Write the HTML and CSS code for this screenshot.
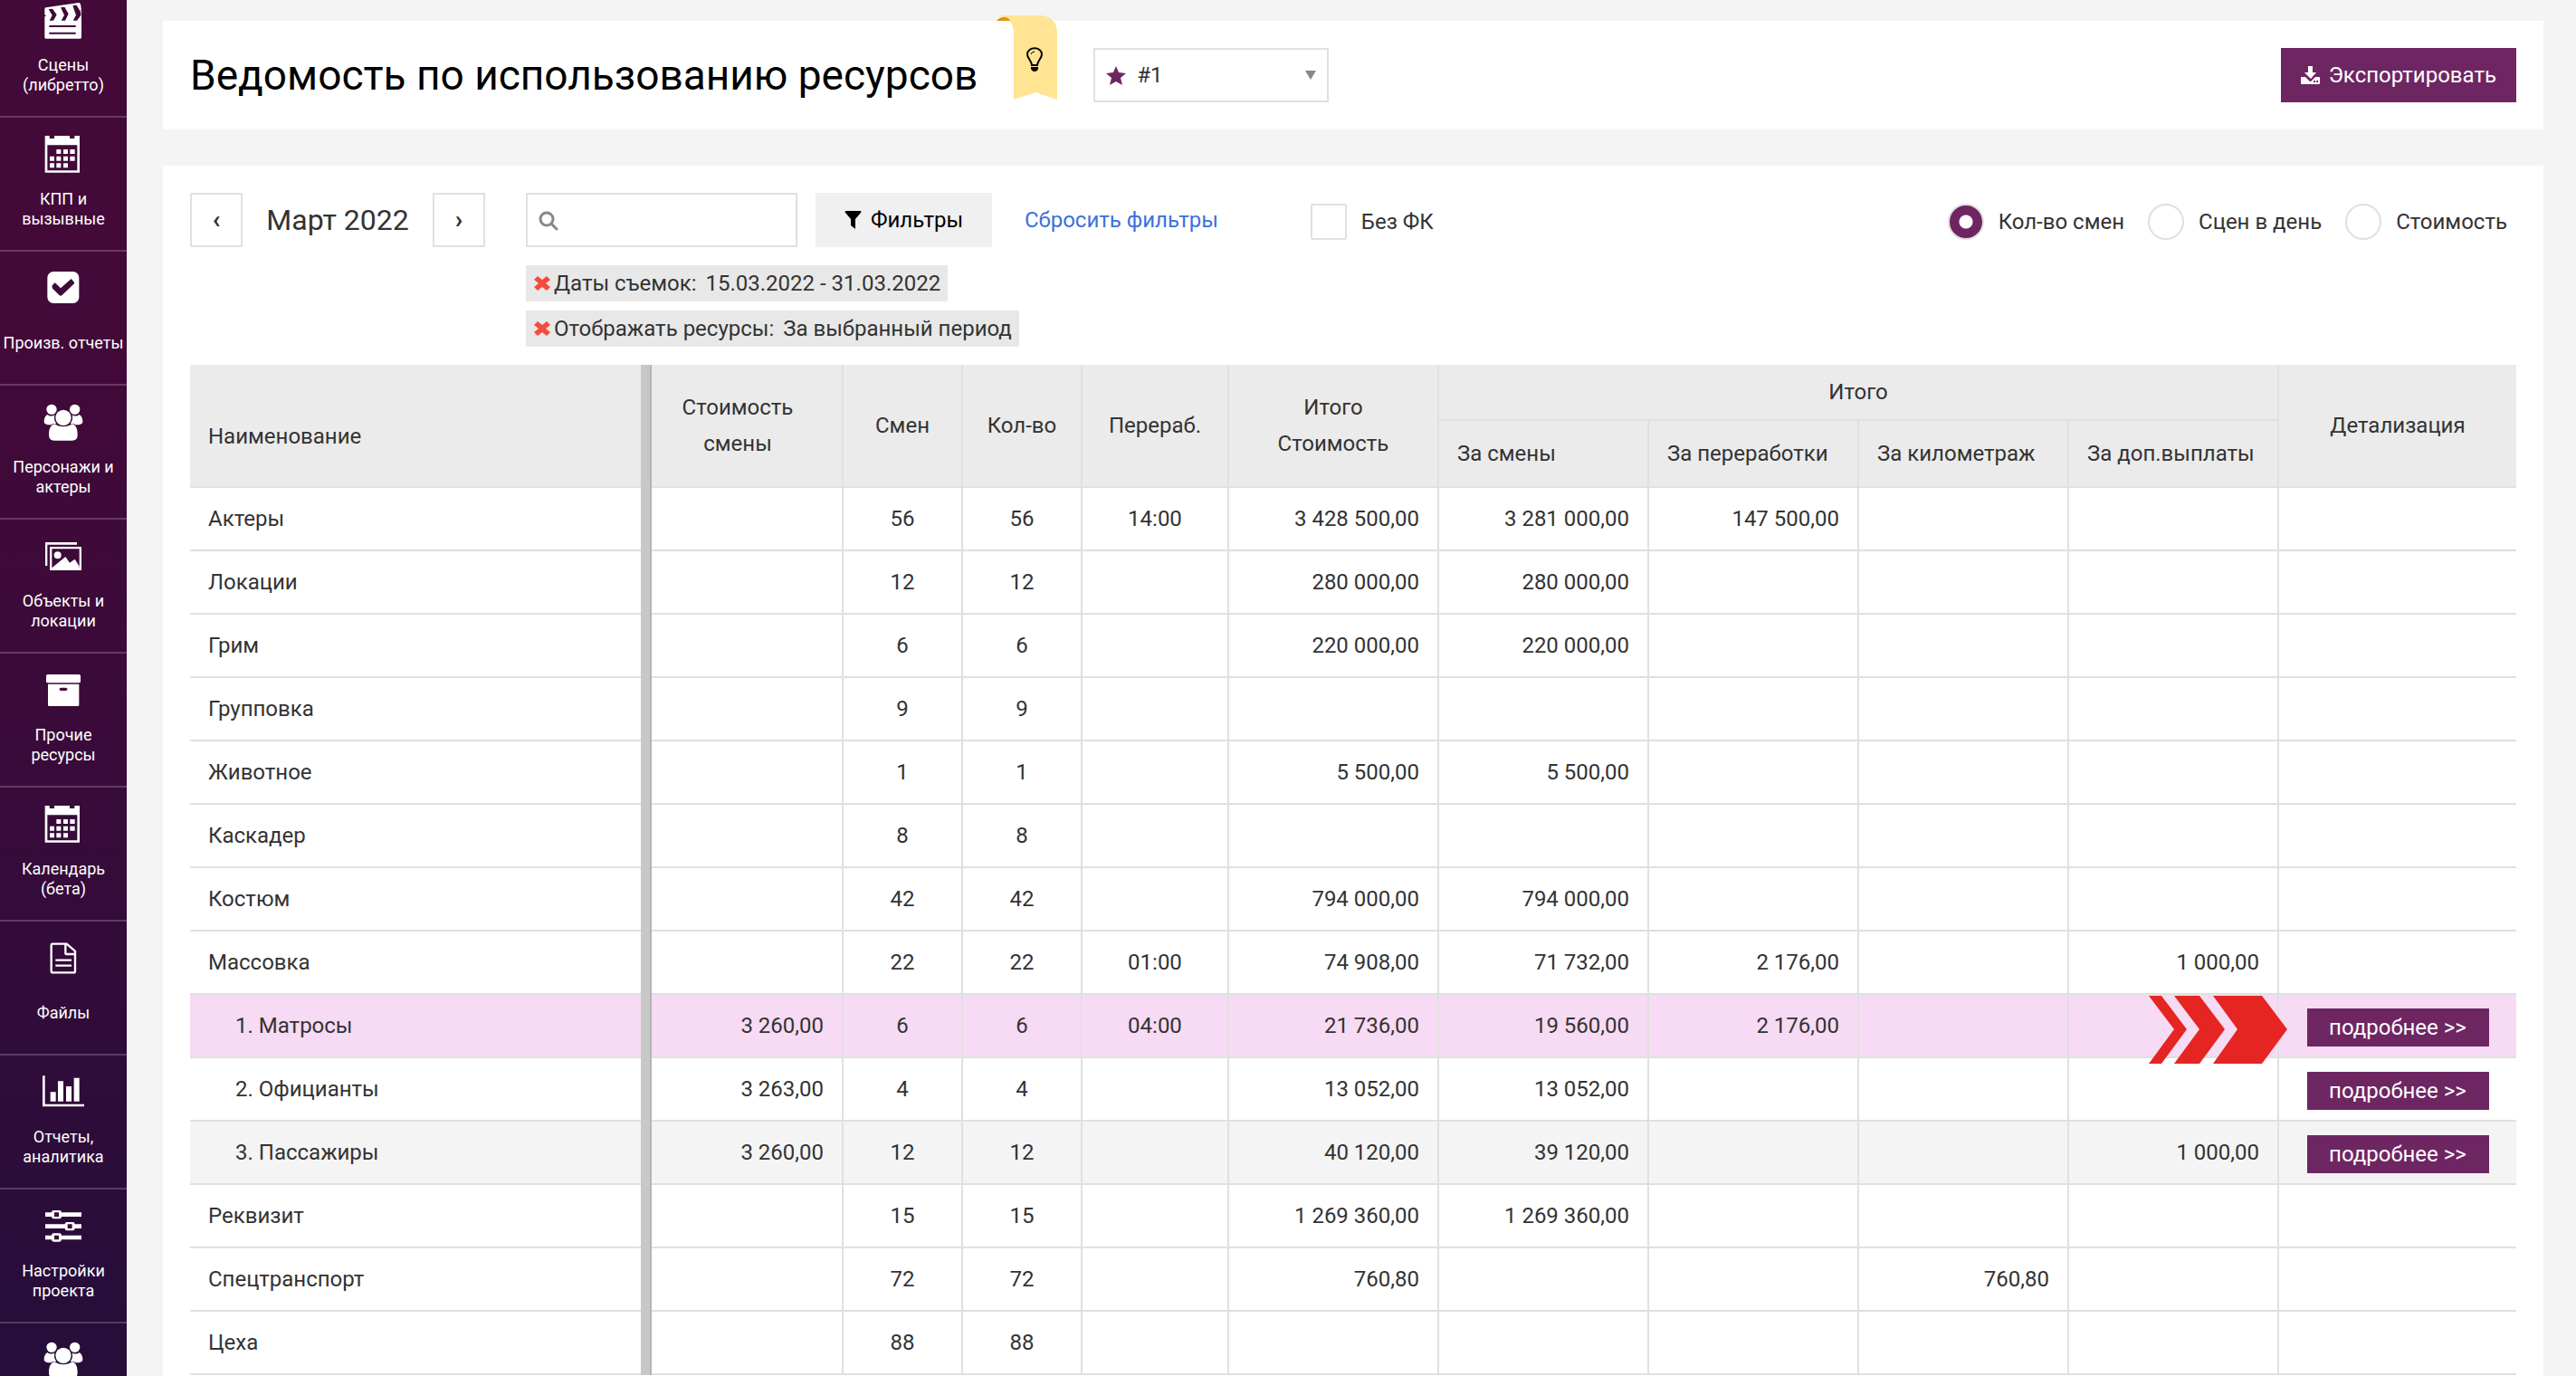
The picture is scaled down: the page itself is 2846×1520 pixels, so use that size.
FILE: index.html
```html
<!DOCTYPE html>
<html lang="ru">
<head>
  <meta charset="UTF-8">
  <meta name="viewport" content="width=device-width, initial-scale=1">
  <title>Ведомость по использованию ресурсов</title>
  <link rel="stylesheet" href="styles.css">
</head>
<body>

  <!-- Иконки, которые используются несколько раз -->
  <svg class="sprite" aria-hidden="true">
    <symbol id="icon-calendar" viewBox="0 0 132 132">
      <path fill-rule="evenodd" d="M5 6h15v9h16V6h51v9h16V6h17v122H5zM13 37v84h99V37z"/>
      <path d="M43 51h15v15H43zM66 51h15v15H66zM88 51h16v15H88zM21 74h15v15H21zM43 74h15v15H43zM66 74h15v15H66zM88 74h16v15H88zM21 97h15v15H21zM43 97h15v15H43zM66 97h15v15H66z"/>
    </symbol>
    <symbol id="icon-group" viewBox="0 0 132 132">
      <circle cx="27" cy="25" r="17"/>
      <circle cx="104" cy="25" r="17"/>
      <circle cx="66" cy="52" r="26"/>
      <path d="M13 42c8 6 18 6 24 1-3 14 0 22 6 29-8-1-14 0-17 4C10 76 2 73 2 65c0-11 4-19 11-23z"/>
      <path d="M119 42c-8 6-18 6-24 1 3 14 0 22-6 29 8-1 14 0 17 4 16 0 24-3 24-11 0-11-4-19-11-23z"/>
      <path d="M37 73c16 12 42 12 58 0 14 3 18 18 18 36 0 13-6 19-18 19H36c-12 0-18-6-18-19 0-18 5-33 19-36z"/>
    </symbol>
    <symbol id="icon-remove" viewBox="0 0 18 18">
      <path d="M4 1l5 4 5-4 4 4-5 4 5 4-4 4-5-4-5 4-4-4 5-4-5-4z"/>
    </symbol>
  </svg>

  <div class="layout">
    <nav class="sidebar">
      <a href="#" class="nav-item">
        <svg viewBox="0 0 132 132">
          <path d="M4 29Q4 26 8 25L117 9q5 0 6 5l3 18-6 3h6v89q0 4-4 4H8q-4 0-4-4V54l6-1-6-4z"/>
          <path class="cut" d="M17 31l13-2 14 20-11 19H20l9-18zM57 25l13-2 13 23-11 22H59l10-18zM97 19l13-2 14 24v10l-13 17H98l10-18zM19 84h88v6H19zM19 107h88v6H19z"/>
        </svg>
        <span>Сцены<br>(либретто)</span>
      </a>
      <a href="#" class="nav-item">
        <svg><use href="#icon-calendar"/></svg>
        <span>КПП и<br>вызывные</span>
      </a>
      <a href="#" class="nav-item">
        <svg viewBox="0 0 132 132">
          <rect x="13" y="12" width="105" height="105" rx="20"/>
          <path class="cut" d="M29 58l9-9 19 18 35-31 10 11v5L62 90q-5 4-10 0L29 67z"/>
        </svg>
        <span>Произв. отчеты</span>
      </a>
      <a href="#" class="nav-item">
        <svg><use href="#icon-group"/></svg>
        <span>Персонажи и<br>актеры</span>
      </a>
      <a href="#" class="nav-item">
        <svg viewBox="0 0 132 132">
          <path d="M6 21h105v8H13v70H6z"/>
          <path fill-rule="evenodd" d="M21 36h105v78H21zM28 43v64h91V43z"/>
          <circle cx="47" cy="64" r="12"/>
          <path d="M28 106l45-37 14 20 17-12 15 24v8H28z"/>
        </svg>
        <span>Объекты и<br>локации</span>
      </a>
      <a href="#" class="nav-item">
        <svg viewBox="0 0 132 132">
          <rect x="9" y="15" width="114" height="28" rx="5"/>
          <path d="M15 47h103v69q0 4-4 4H19q-4 0-4-4z"/>
          <rect class="cut" x="53" y="59" width="26" height="10" rx="5"/>
        </svg>
        <span>Прочие<br>ресурсы</span>
      </a>
      <a href="#" class="nav-item">
        <svg><use href="#icon-calendar"/></svg>
        <span>Календарь<br>(бета)</span>
      </a>
      <a href="#" class="nav-item">
        <svg viewBox="0 0 132 132" class="outline">
          <path d="M30 20h47l28 24v66q0 5-5 5H31q-5 0-5-5V25q0-5 4-5z"/>
          <path d="M73 20v30q0 4 4 4h28M40 74h53M40 92h53"/>
        </svg>
        <span>Файлы</span>
      </a>
      <a href="#" class="nav-item">
        <svg viewBox="0 0 132 132">
          <path d="M-3 13h8v94h130v8H-3zM23 67h18v31H23zM48 31h18v67H48zM75 48h18v50H75zM101 20h18v78h-18z"/>
        </svg>
        <span>Отчеты,<br>аналитика</span>
      </a>
      <a href="#" class="nav-item">
        <svg viewBox="0 0 132 132">
          <path d="M6 22h120v14H6zM6 61h120v14H6zM6 98h120v14H6z"/>
          <rect x="27" y="15" width="33" height="28" rx="7"/>
          <rect x="71" y="54" width="33" height="28" rx="7"/>
          <rect x="27" y="91" width="33" height="28" rx="7"/>
          <path class="cut" d="M36 22h15v14H36zM80 61h15v14H80zM36 98h15v14H36z"/>
        </svg>
        <span>Настройки<br>проекта</span>
      </a>
      <a href="#" class="nav-item" aria-label="Группы">
        <svg><use href="#icon-group"/></svg>
      </a>
    </nav>

    <main class="content">
      <header class="card page-header">
        <h1>Ведомость по использованию ресурсов</h1>
        <button type="button" class="hint" aria-label="Подсказка">
          <svg viewBox="0 0 68 94">
            <path fill="#ffe494" d="M5 1Q8 0 12 0h38c12 1 18 9 18 19v74l-24-8-24 8V20C20 11 17 4 5 1z"/>
            <path fill="#d9960f" d="M1 6Q4 2 9 2q5 0 7 4z"/>
            <path fill="none" stroke="#000" stroke-width="2" d="M40 55c0-5-5-7-5-12 0-9 16-9 16 0 0 5-5 7-5 12z"/>
            <path fill="none" stroke="#000" stroke-width="1" d="M39 43q1-3 4-3"/>
            <path d="M39 57h8v2q-1 3-4 3t-4-3z"/>
          </svg>
        </button>
        <div class="preset">
          <svg class="preset-star" viewBox="0 0 22 21"><path d="M11 0l3 7 8 1-6 5 2 8-7-4-7 4 2-8-6-5 8-1z"/></svg>
          <select aria-label="Вариант">
            <option>#1</option>
          </select>
          <svg class="preset-arrow" viewBox="0 0 12 10"><path d="M0 0h12L6 10z"/></svg>
        </div>
        <button type="button" class="btn-primary">
          <svg viewBox="0 0 21 20"><path d="M8 0h5v7h4l-6 7-7-7h4zM1 12h4l5 5h1l5-5h4q1 0 1 1v6q0 1-1 1H1q-1 0-1-1v-6q0-1 1-1zM14 16v2h2v-2zM17 16v2h2v-2z" fill-rule="evenodd"/></svg>
          Экспортировать
        </button>
      </header>

      <section class="card report">
        <div class="toolbar">
          <div class="month">
            <button type="button" class="btn-arrow" aria-label="Предыдущий месяц">‹</button>
            <span class="month-name">Март 2022</span>
            <button type="button" class="btn-arrow" aria-label="Следующий месяц">›</button>
          </div>
          <div class="filters">
            <div class="filters-row">
              <div class="search">
                <svg viewBox="0 0 22 22"><circle cx="9" cy="9" r="7"/><path d="M14 14l6 6"/></svg>
                <input type="search" aria-label="Поиск">
              </div>
              <button type="button" class="btn-filter">
                <svg viewBox="0 0 19 20"><path d="M1 0h17q1 1 0 2l-6 7v11l-5-4V9L1 2Q0 1 1 0z"/></svg>
                Фильтры
              </button>
              <a href="#" class="reset">Сбросить фильтры</a>
              <label class="check"><input type="checkbox">Без ФК</label>
            </div>
            <div class="tag"><svg><use href="#icon-remove"/></svg>Даты съемок: <span>15.03.2022 - 31.03.2022</span></div>
            <div class="tag"><svg><use href="#icon-remove"/></svg>Отображать ресурсы: <span>За выбранный период</span></div>
          </div>
          <div class="modes">
            <label class="check"><input type="radio" name="mode" checked>Кол-во смен</label>
            <label class="check"><input type="radio" name="mode">Сцен в день</label>
            <label class="check"><input type="radio" name="mode">Стоимость</label>
          </div>
        </div>

        <table class="resources">
          <colgroup>
            <col>
            <col class="col-price">
            <col class="col-count">
            <col class="col-count">
            <col class="col-over">
            <col class="col-sum">
            <col class="col-sum">
            <col class="col-sum">
            <col class="col-sum">
            <col class="col-sum">
            <col class="col-details">
          </colgroup>
          <thead>
            <tr class="head-top">
              <th rowspan="2" class="name">Наименование</th>
              <th rowspan="2" class="price">Стоимость смены</th>
              <th rowspan="2">Смен</th>
              <th rowspan="2">Кол-во</th>
              <th rowspan="2">Перераб.</th>
              <th rowspan="2">Итого<br>Стоимость</th>
              <th colspan="4">Итого</th>
              <th rowspan="2">Детализация</th>
            </tr>
            <tr class="head-sub">
              <th>За смены</th>
              <th>За переработки</th>
              <th>За километраж</th>
              <th>За доп.выплаты</th>
            </tr>
          </thead>
          <tbody>
            <tr><td>Актеры</td><td></td><td>56</td><td>56</td><td>14:00</td><td>3 428 500,00</td><td>3 281 000,00</td><td>147 500,00</td><td></td><td></td><td></td></tr>
            <tr><td>Локации</td><td></td><td>12</td><td>12</td><td></td><td>280 000,00</td><td>280 000,00</td><td></td><td></td><td></td><td></td></tr>
            <tr><td>Грим</td><td></td><td>6</td><td>6</td><td></td><td>220 000,00</td><td>220 000,00</td><td></td><td></td><td></td><td></td></tr>
            <tr><td>Групповка</td><td></td><td>9</td><td>9</td><td></td><td></td><td></td><td></td><td></td><td></td><td></td></tr>
            <tr><td>Животное</td><td></td><td>1</td><td>1</td><td></td><td>5 500,00</td><td>5 500,00</td><td></td><td></td><td></td><td></td></tr>
            <tr><td>Каскадер</td><td></td><td>8</td><td>8</td><td></td><td></td><td></td><td></td><td></td><td></td><td></td></tr>
            <tr><td>Костюм</td><td></td><td>42</td><td>42</td><td></td><td>794 000,00</td><td>794 000,00</td><td></td><td></td><td></td><td></td></tr>
            <tr><td>Массовка</td><td></td><td>22</td><td>22</td><td>01:00</td><td>74 908,00</td><td>71 732,00</td><td>2 176,00</td><td></td><td>1 000,00</td><td></td></tr>
            <tr class="child active">
              <td>1. Матросы</td><td>3 260,00</td><td>6</td><td>6</td><td>04:00</td><td>21 736,00</td><td>19 560,00</td><td>2 176,00</td><td></td><td></td>
              <td>
                <svg class="pointer" viewBox="0 0 153 75"><path d="M0 0h14l28 37-28 38H0l28-38zM28 0h28l28 37-28 38H28l28-38zM71 0h54l28 37-28 38H71l27-38z"/></svg>
                <a href="#" class="btn-more">подробнее &gt;&gt;</a>
              </td>
            </tr>
            <tr class="child">
              <td>2. Официанты</td><td>3 263,00</td><td>4</td><td>4</td><td></td><td>13 052,00</td><td>13 052,00</td><td></td><td></td><td></td>
              <td><a href="#" class="btn-more">подробнее &gt;&gt;</a></td>
            </tr>
            <tr class="child even">
              <td>3. Пассажиры</td><td>3 260,00</td><td>12</td><td>12</td><td></td><td>40 120,00</td><td>39 120,00</td><td></td><td></td><td>1 000,00</td>
              <td><a href="#" class="btn-more">подробнее &gt;&gt;</a></td>
            </tr>
            <tr><td>Реквизит</td><td></td><td>15</td><td>15</td><td></td><td>1 269 360,00</td><td>1 269 360,00</td><td></td><td></td><td></td><td></td></tr>
            <tr><td>Спецтранспорт</td><td></td><td>72</td><td>72</td><td></td><td>760,80</td><td></td><td></td><td>760,80</td><td></td><td></td></tr>
            <tr><td>Цеха</td><td></td><td>88</td><td>88</td><td></td><td></td><td></td><td></td><td></td><td></td><td></td></tr>
          </tbody>
        </table>
      </section>
    </main>
  </div>

</body>
</html>
```
FILE: styles.css
```css
* {
  box-sizing: border-box;
}

body {
  margin: 0;
  background: #f4f4f4;
  color: #333;
  font-family: Roboto, "Noto Sans", sans-serif;
  font-size: 24px;
  line-height: 40px;
}

a {
  text-decoration: none;
}

button, input, select {
  font: inherit;
  color: inherit;
  margin: 0;
}

button {
  cursor: pointer;
}

.sprite {
  display: none;
}

.layout {
  display: flex;
  height: 100vh;
  overflow: hidden;
}

/* Боковое меню */
.sidebar {
  flex: none;
  width: 140px;
  background: linear-gradient(#420939 0%, #420939 25%, #390b3a 55%, #260d3a 100%);
}

.nav-item {
  display: block;
  height: 148px;
  padding-top: 18px;
  border-bottom: 2px solid rgba(255, 255, 255, 0.2);
  color: #fff;
  text-align: center;
}

/* меню прокручено, верхний отступ первого пункта скрыт */
.nav-item:first-child {
  height: 130px;
  padding-top: 0;
}

.nav-item svg {
  display: block;
  width: 44px;
  height: 44px;
  margin: 0 auto;
  fill: #fff;
  overflow: visible;
}

.nav-item svg.outline {
  fill: none;
  stroke: #fff;
  stroke-width: 7;
}

.nav-item .cut {
  fill: #3f0a39;
}

.nav-item span {
  display: flex;
  align-items: center;
  justify-content: center;
  height: 78px;
  font-size: 18px;
  line-height: 22px;
  white-space: nowrap;
}

/* Шапка страницы */
.content {
  flex: 1;
  min-width: 0;
  padding: 23px 36px 0 40px;
}

.card {
  padding: 30px;
  background: #fff;
}

.page-header {
  display: flex;
  align-items: center;
  height: 120px;
  margin-bottom: 40px;
}

h1 {
  margin: 0;
  color: #000;
  font-size: 46px;
  font-weight: 400;
  white-space: nowrap;
}

.hint {
  align-self: flex-start;
  margin: -36px 40px 0 20px;
  padding: 0;
  border: 0;
  background: none;
}

.hint svg {
  display: block;
  width: 68px;
  height: 94px;
}

.preset {
  position: relative;
  width: 260px;
}

.preset select {
  display: block;
  width: 100%;
  height: 60px;
  padding: 0 46px;
  border: 2px solid #e0e0e0;
  border-radius: 0;
  background: #fff;
  appearance: none;
}

.preset svg {
  position: absolute;
  pointer-events: none;
}

.preset-star {
  left: 14px;
  top: 20px;
  width: 22px;
  fill: #6e2663;
}

.preset-arrow {
  right: 14px;
  top: 25px;
  width: 12px;
  fill: #888;
}

.btn-primary {
  display: flex;
  align-items: center;
  gap: 10px;
  height: 60px;
  margin-left: auto;
  padding: 0 22px;
  border: 0;
  background: #6e2663;
  color: #fff;
}

.btn-primary svg {
  width: 21px;
  height: 20px;
  fill: #fff;
}

/* Фильтры */
.toolbar {
  display: flex;
  align-items: flex-start;
  margin-bottom: 20px;
}

.month {
  display: flex;
  align-items: center;
  justify-content: space-between;
  width: 326px;
  margin-right: 45px;
}

.month-name {
  font-size: 32px;
}

.btn-arrow {
  width: 58px;
  height: 60px;
  padding: 0;
  border: 2px solid #e0e0e0;
  background: #fff;
  font-size: 28px;
  font-weight: 700;
}

.filters-row {
  display: flex;
  align-items: center;
  margin-bottom: 20px;
}

.search {
  position: relative;
  width: 300px;
  margin-right: 20px;
}

.search input {
  display: block;
  width: 100%;
  height: 60px;
  padding: 0 14px 0 46px;
  border: 2px solid #e0e0e0;
  background: #fff;
  appearance: none;
}

.search svg {
  position: absolute;
  left: 14px;
  top: 20px;
  width: 22px;
  height: 22px;
  fill: none;
  stroke: #888;
  stroke-width: 3;
  stroke-linecap: round;
}

.btn-filter {
  display: flex;
  align-items: center;
  justify-content: center;
  gap: 10px;
  width: 195px;
  height: 60px;
  border: 0;
  background: #f0f0f0;
  color: #000;
}

.btn-filter svg {
  width: 19px;
  height: 20px;
}

.reset {
  margin: 0 102px 0 36px;
  color: #3a72da;
}

.check {
  display: flex;
  align-items: center;
  gap: 16px;
  padding-top: 4px;
}

.check input {
  width: 40px;
  height: 40px;
  border: 2px solid #e0e0e0;
  border-radius: 2px;
  background: #fff;
  appearance: none;
}

.check input[type="radio"] {
  border-radius: 50%;
}

.check input[type="radio"]:checked {
  background: radial-gradient(circle, #fff 7px, #6e2663 8px);
}

.tag {
  display: flex;
  align-items: center;
  gap: 4px;
  width: max-content;
  height: 40px;
  margin-bottom: 10px;
  padding: 0 8px 0 9px;
  background: #e8e8e8;
}

.tag:last-child {
  margin-bottom: 0;
}

.tag span {
  margin-left: 6px;
}

.tag svg {
  width: 18px;
  height: 18px;
  fill: #f44c3c;
}

.modes {
  display: flex;
  gap: 26px;
  margin: 10px 10px 0 auto;
}

.modes .check {
  padding-top: 2px;
}

/* Таблица ресурсов */
.resources {
  width: 100%;
  border-collapse: separate;
  border-spacing: 0;
  table-layout: fixed;
}

.col-price {
  width: 212px;
}

.col-count {
  width: 132px;
}

.col-over {
  width: 162px;
}

.col-sum {
  width: 232px;
}

.col-details {
  width: 262px;
}

.resources th,
.resources td {
  padding: 0 20px;
  border-right: 2px solid #e0e0e0;
  border-bottom: 2px solid #e0e0e0;
  font-weight: 400;
}

.resources th {
  background: #ebebeb;
}

.resources td {
  height: 70px;
  text-align: right;
}

.resources th.name,
.resources td:first-child {
  position: relative;
  border-right: 0;
  text-align: left;
}

/* разделитель закреплённой колонки, перекрывает линии строк */
.resources th.name::after,
.resources td:first-child::after {
  content: "";
  position: absolute;
  top: 0;
  right: 0;
  bottom: -2px;
  width: 10px;
  border-right: 2px solid #b4b4b4;
  background: #c8c8c8;
}

.resources th.name {
  padding-top: 24px;
}

.resources th.price {
  padding-right: 40px;
}

.resources .head-top th:last-child,
.resources td:last-child {
  border-right: 0;
}

.head-top {
  height: 62px;
}

.head-sub {
  height: 74px;
}

.resources .head-sub th {
  text-align: left;
  white-space: nowrap;
}

.resources td:nth-child(3),
.resources td:nth-child(4),
.resources td:nth-child(5),
.resources td:last-child {
  text-align: center;
}

.resources td:last-child {
  position: relative;
}

.resources .child td:first-child {
  padding-left: 50px;
}

.active td {
  background: #f7daf3;
}

.even td {
  background: #f4f4f4;
}

.btn-more {
  display: block;
  width: 201px;
  height: 42px;
  margin: 4px auto 0;
  background: #6e2663;
  color: #fff;
  line-height: 42px;
}

.pointer {
  position: absolute;
  left: -144px;
  top: 1px;
  width: 153px;
  height: 75px;
  fill: #e52521;
  z-index: 1;
}
```
